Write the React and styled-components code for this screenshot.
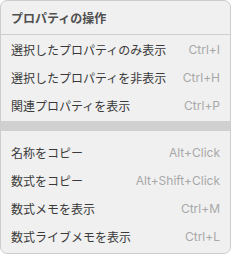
import React from "react";
import styled, { createGlobalStyle } from "styled-components";

const Global = createGlobalStyle`
  html, body { margin: 0; padding: 0; background: #ffffff; }
  body { font-family: "Inter", "Noto Sans CJK JP", sans-serif; }
`;

const Menu = styled.div`
  width: 231px;
  height: 254px;
  box-sizing: border-box;
  border: 1px solid #cdcdcd;
  border-radius: 7px;
  background: #f0f0f0;
  display: flex;
  flex-direction: column;
  overflow: hidden;
`;

const Header = styled.div`
  height: 33px;
  display: flex;
  align-items: center;
  padding: 0 10px;
  font-size: 12px;
  font-weight: 700;
  color: #4f4f4f;
  border-bottom: 1px solid #cfcfcf;
`;

const Section = styled.div`
  display: flex;
  flex-direction: column;
  padding-top: ${(p) => p.$top || 0}px;
`;

const Row = styled.div`
  height: 28px;
  display: flex;
  align-items: center;
  justify-content: space-between;
  padding: 0 10px 0 10px;
  font-size: 12px;
`;

const Label = styled.span`
  color: #3a3a3a;
`;

const Shortcut = styled.span`
  color: #a8a8a8;
`;

const Band = styled.div`
  height: 10px;
  margin-top: 2px;
  background: #d0d0d0;
`;

const top = [
  ["選択したプロパティのみ表示", "Ctrl+I"],
  ["選択したプロパティを非表示", "Ctrl+H"],
  ["関連プロパティを表示", "Ctrl+P"],
];

const bottom = [
  ["名称をコピー", "Alt+Click"],
  ["数式をコピー", "Alt+Shift+Click"],
  ["数式メモを表示", "Ctrl+M"],
  ["数式ライブメモを表示", "Ctrl+L"],
];

export default function App() {
  return (
    <>
      <Global />
      <Menu>
        <Header>プロパティの操作</Header>
        <Section>
          {top.map(([l, s]) => (
            <Row key={l}>
              <Label>{l}</Label>
              <Shortcut>{s}</Shortcut>
            </Row>
          ))}
        </Section>
        <Band />
        <Section $top={7}>
          {bottom.map(([l, s]) => (
            <Row key={l}>
              <Label>{l}</Label>
              <Shortcut>{s}</Shortcut>
            </Row>
          ))}
        </Section>
      </Menu>
    </>
  );
}
